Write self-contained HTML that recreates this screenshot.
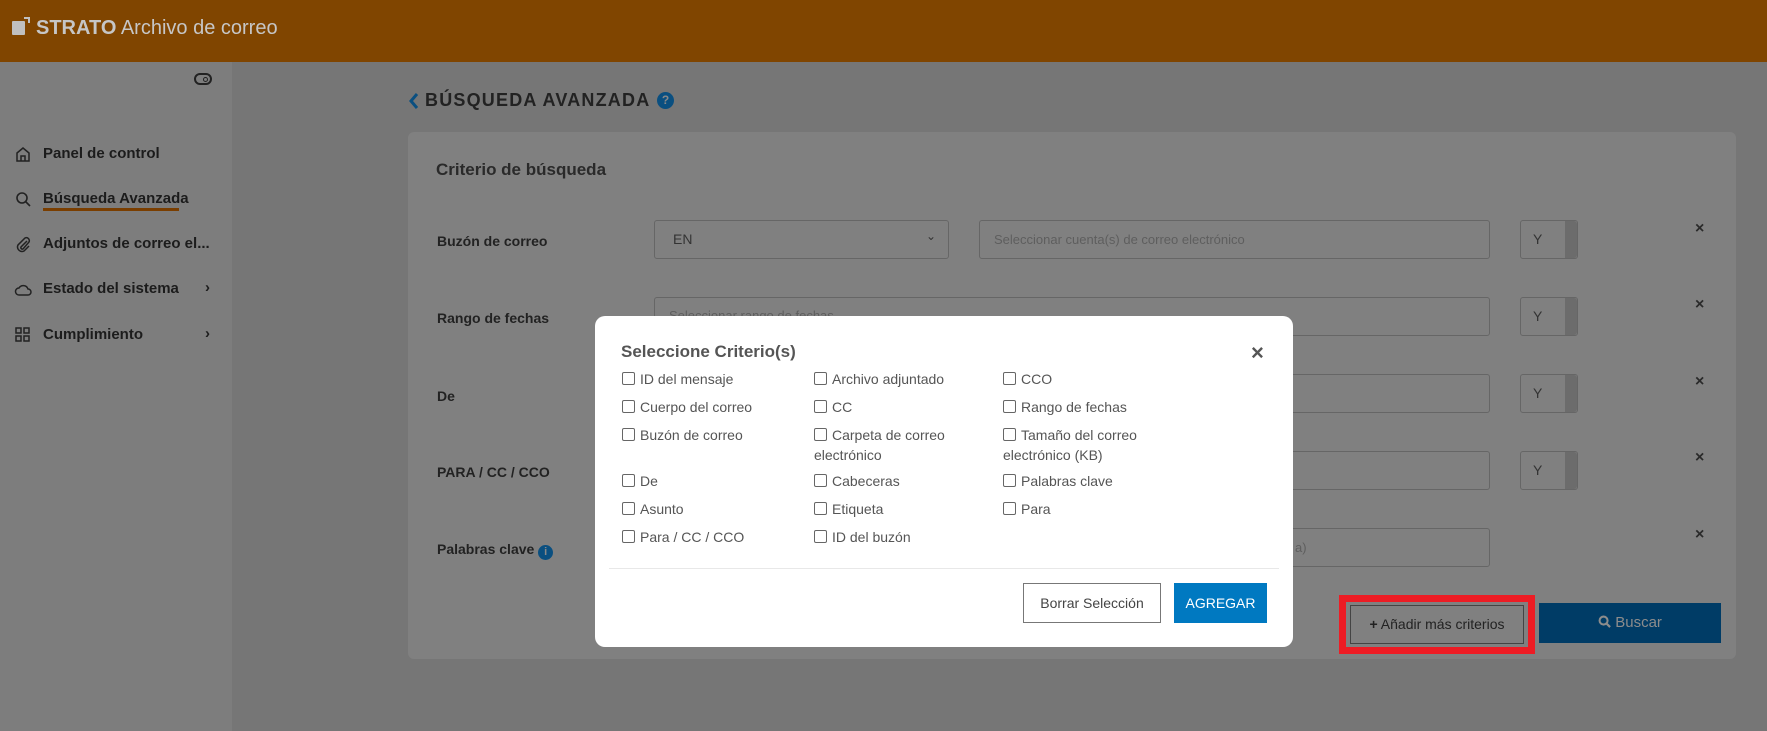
<!DOCTYPE html>
<html><head><meta charset="utf-8">
<style>
*{box-sizing:border-box;margin:0;padding:0}
body{width:1767px;height:731px;overflow:hidden;background:#767676;font-family:"Liberation Sans",sans-serif;position:relative;color:#1e1e1e}
.a{position:absolute}
.hdr{left:0;top:0;width:1767px;height:62px;background:#804500}
.side{left:0;top:62px;width:232px;height:669px;background:#7d7d7d}
.nav{left:43px;font-size:15px;font-weight:bold;color:#1c1c1c}
.ico{left:14px;width:18px;height:18px}
.card{left:408px;top:132px;width:1328px;height:527px;background:#808080;border-radius:6px}
.lbl{left:437px;font-size:14px;font-weight:bold;color:#222}
.box{border:1px solid #666;border-radius:3px;height:39px;background:#808080}
.ys{left:1520px;width:58px}
.ys span{position:absolute;left:12px;top:10px;font-size:14px;color:#333}
.ys i{position:absolute;right:0;top:0;width:12px;height:37px;background:#6c6c6c;border-radius:0 3px 3px 0}
.x{left:1695px;font-size:16px;font-weight:bold;color:#2a2a2a}
.modal{left:595px;top:316px;width:698px;height:331px;background:#fff;border-radius:10px}
.cb{font-size:14px;color:#555;line-height:20px}
.cb b{display:inline-block;width:13px;height:13px;border:1.5px solid #666;border-radius:2px;vertical-align:-1px;margin-right:5px}
</style></head><body>
<div class="a hdr"></div>
<div class="a" style="left:12px;top:21px;width:13px;height:14px;background:#c0c0c0;border-radius:1px"></div>
<div class="a" style="left:24px;top:17px;width:6px;height:6px;border-top:2px solid #c0c0c0;border-right:2px solid #c0c0c0"></div>
<div class="a" style="left:36px;top:17px;font-size:20px;color:#c6c6c6"><b>STRATO</b> Archivo de correo</div>

<div class="a side"></div>
<div class="a" style="left:194px;top:73px;width:18px;height:12px;border:2px solid #222;border-radius:6px"></div>
<div class="a" style="left:203px;top:77px;width:5px;height:5px;border:1.5px solid #222;border-radius:50%"></div>

<svg class="a ico" style="top:145px" viewBox="0 0 18 18" fill="none" stroke="#222" stroke-width="1.5"><path d="M3 8 9 3l6 5v8H3z M7 16v-5h4v5"/></svg>
<div class="a nav" style="top:145px">Panel de control</div>
<svg class="a ico" style="top:190px" viewBox="0 0 18 18" fill="none" stroke="#222" stroke-width="1.6"><circle cx="8" cy="8" r="5"/><path d="M12 12l4 4"/></svg>
<div class="a nav" style="top:190px">Búsqueda Avanzada</div>
<div class="a" style="left:43px;top:208px;width:136px;height:3px;background:#7a3e00"></div>
<svg class="a ico" style="top:235px" viewBox="0 0 18 18" fill="none" stroke="#222" stroke-width="1.5"><path d="M13 6 7 12a1.5 1.5 0 0 0 2 2l6-7a3 3 0 0 0-4-4l-7 7a4.5 4.5 0 0 0 6 6l5-5"/></svg>
<div class="a nav" style="top:235px">Adjuntos de correo el...</div>
<svg class="a ico" style="top:280px" viewBox="0 0 18 18" fill="none" stroke="#222" stroke-width="1.5"><path d="M5 15h9a3 3 0 0 0 0-6 5 5 0 0 0-9-1 3.5 3.5 0 0 0 0 7z"/></svg>
<div class="a nav" style="top:280px">Estado del sistema</div>
<div class="a nav" style="left:205px;top:279px">›</div>
<svg class="a ico" style="top:326px" viewBox="0 0 18 18" fill="none" stroke="#222" stroke-width="1.5"><rect x="2" y="2" width="5" height="5"/><rect x="10" y="2" width="5" height="5"/><rect x="2" y="10" width="5" height="5"/><rect x="10" y="10" width="5" height="5"/></svg>
<div class="a nav" style="top:326px">Cumplimiento</div>
<div class="a nav" style="left:205px;top:325px">›</div>

<svg class="a" style="left:408px;top:92px" width="12" height="18" viewBox="0 0 12 18"><path d="M9 2 3 9l6 7" fill="none" stroke="#0a4f80" stroke-width="3"/></svg>
<div class="a" style="left:425px;top:90px;font-size:18px;font-weight:bold;letter-spacing:1.2px;color:#222">BÚSQUEDA AVANZADA</div>
<div class="a" style="left:657px;top:92px;width:17px;height:17px;border-radius:50%;background:#0a4f80;color:#888;font-size:12px;font-weight:bold;text-align:center;line-height:17px">?</div>

<div class="a card"></div>
<div class="a" style="left:436px;top:160px;font-size:17px;font-weight:bold;color:#2a2a2a">Criterio de búsqueda</div>

<div class="a lbl" style="top:233px">Buzón de correo</div>
<div class="a lbl" style="top:310px">Rango de fechas</div>
<div class="a lbl" style="top:388px">De</div>
<div class="a lbl" style="top:464px">PARA / CC / CCO</div>
<div class="a lbl" style="top:541px">Palabras clave <span style="display:inline-block;width:15px;height:15px;border-radius:50%;background:#0a4f80;color:#888;font-size:11px;text-align:center;line-height:15px;vertical-align:-1px">i</span></div>

<div class="a box" style="left:654px;top:220px;width:295px"><span class="a" style="left:18px;top:10px;font-size:14px;color:#333">EN</span><span class="a" style="right:12px;top:8px;font-size:12px;color:#333">⌄</span></div>
<div class="a box" style="left:979px;top:220px;width:511px"><span class="a" style="left:14px;top:11px;font-size:13px;color:#5e5e5e">Seleccionar cuenta(s) de correo electrónico</span></div>
<div class="a box" style="left:654px;top:297px;width:836px"><span class="a" style="left:14px;top:10px;font-size:13px;color:#5e5e5e">Seleccionar rango de fechas</span></div>
<div class="a box" style="left:979px;top:374px;width:511px"></div>
<div class="a box" style="left:979px;top:451px;width:511px"></div>
<div class="a box" style="left:979px;top:528px;width:511px"><span class="a" style="left:315px;top:11px;font-size:13px;color:#5e5e5e">a)</span></div>
<div class="a box ys" style="top:220px"><span>Y</span><i></i></div>
<div class="a box ys" style="top:297px"><span>Y</span><i></i></div>
<div class="a box ys" style="top:374px"><span>Y</span><i></i></div>
<div class="a box ys" style="top:451px"><span>Y</span><i></i></div>
<div class="a x" style="top:220px">×</div>
<div class="a x" style="top:296px">×</div>
<div class="a x" style="top:373px">×</div>
<div class="a x" style="top:449px">×</div>
<div class="a x" style="top:526px">×</div>

<div class="a" style="left:1339px;top:595px;width:196px;height:59px;border:7px solid #ed1c24"></div>
<div class="a" style="left:1350px;top:605px;width:174px;height:39px;border:1px solid #444;background:#808080;font-size:14px;color:#222;text-align:center;line-height:37px"><b>+</b> Añadir más criterios</div>
<div class="a" style="left:1539px;top:603px;width:182px;height:40px;background:#003c66;font-size:15px;color:#8c8c8c;text-align:center;line-height:40px"><svg width="13" height="13" viewBox="0 0 14 14" style="vertical-align:-1px"><circle cx="6" cy="6" r="4.3" fill="none" stroke="#8c8c8c" stroke-width="2.2"/><path d="M9 9l4 4" stroke="#8c8c8c" stroke-width="2.4"/></svg> Buscar</div>

<div class="a modal">
<div class="a" style="left:26px;top:26px;font-size:17px;font-weight:bold;color:#555">Seleccione Criterio(s)</div>
<div class="a" style="left:656px;top:24px;font-size:22px;font-weight:bold;color:#555">×</div>
<div class="a cb" style="left:27px;top:53px"><b></b>ID del mensaje</div>
<div class="a cb" style="left:27px;top:81px"><b></b>Cuerpo del correo</div>
<div class="a cb" style="left:27px;top:109px"><b></b>Buzón de correo</div>
<div class="a cb" style="left:27px;top:155px"><b></b>De</div>
<div class="a cb" style="left:27px;top:183px"><b></b>Asunto</div>
<div class="a cb" style="left:27px;top:211px"><b></b>Para / CC / CCO</div>
<div class="a cb" style="left:219px;top:53px"><b></b>Archivo adjuntado</div>
<div class="a cb" style="left:219px;top:81px"><b></b>CC</div>
<div class="a cb" style="left:219px;top:109px"><b></b>Carpeta de correo<br>electrónico</div>
<div class="a cb" style="left:219px;top:155px"><b></b>Cabeceras</div>
<div class="a cb" style="left:219px;top:183px"><b></b>Etiqueta</div>
<div class="a cb" style="left:219px;top:211px"><b></b>ID del buzón</div>
<div class="a cb" style="left:408px;top:53px"><b></b>CCO</div>
<div class="a cb" style="left:408px;top:81px"><b></b>Rango de fechas</div>
<div class="a cb" style="left:408px;top:109px"><b></b>Tamaño del correo<br>electrónico (KB)</div>
<div class="a cb" style="left:408px;top:155px"><b></b>Palabras clave</div>
<div class="a cb" style="left:408px;top:183px"><b></b>Para</div>
<div class="a" style="left:14px;top:252px;width:670px;height:1px;background:#e8e8e8"></div>
<div class="a" style="left:428px;top:267px;width:138px;height:40px;border:1px solid #777;font-size:14px;color:#444;text-align:center;line-height:38px">Borrar Selección</div>
<div class="a" style="left:579px;top:267px;width:93px;height:40px;background:#0079c1;font-size:14px;color:#fff;text-align:center;line-height:40px">AGREGAR</div>
</div>
</body></html>
